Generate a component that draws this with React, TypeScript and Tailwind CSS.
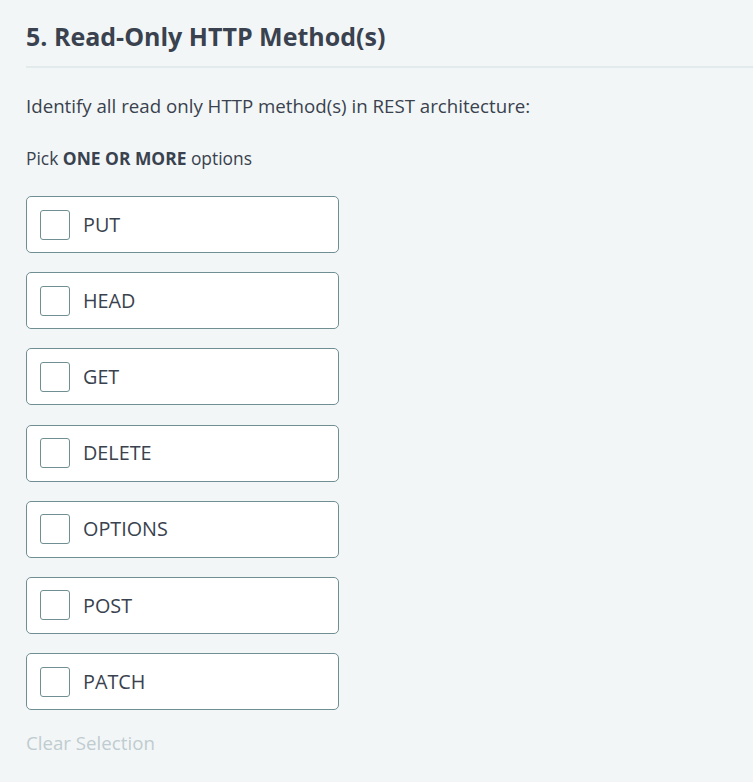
import React, { FC, useState } from "react";

const OPTIONS = ["PUT", "HEAD", "GET", "DELETE", "OPTIONS", "POST", "PATCH"];

const App: FC = () => {
  const [picked, setPicked] = useState<string[]>([]);

  const toggle = (opt: string) => {
    setPicked((prev) =>
      prev.includes(opt) ? prev.filter((p) => p !== opt) : [...prev, opt],
    );
  };

  return (
    <div className="min-h-[782px] bg-[#f3f6f7] pl-[26px] font-['Open_Sans',sans-serif] text-[#39424e]">
      <div className="border-b-2 border-[#e3eaeb] pb-[13px] pt-[19px]">
        <h2 className="text-[25px] font-bold leading-[34px]">
          5. Read-Only HTTP Method(s)
        </h2>
      </div>

      <p className="mt-[25px] text-[18.7px] leading-[26px]">
        Identify all read only HTTP method(s) in REST architecture:
      </p>

      <p className="mt-[28px] text-[17.4px] leading-[22px]">
        Pick <span className="font-bold">ONE OR MORE</span> options
      </p>

      <div className="mt-[27px] flex w-[313px] flex-col gap-[19.2px]">
        {OPTIONS.map((opt) => (
          <label
            key={opt}
            className="flex h-[57px] cursor-pointer items-center gap-[13px] rounded-[5px] border border-[#6f8f93] bg-white pl-[13px]"
            onClick={() => toggle(opt)}
          >
            <span
              className={`flex size-[30px] items-center justify-center rounded-[3px] border border-[#6f8f93] ${
                picked.includes(opt) ? "bg-[#6f8f93]" : "bg-white"
              }`}
            />
            <span className="text-[19.8px]">{opt}</span>
          </label>
        ))}
      </div>

      <button
        className="mt-[20px] text-[18.7px] leading-[26px] text-[#bfccd0]"
        onClick={() => setPicked([])}
      >
        Clear Selection
      </button>
    </div>
  );
};

export default App;
